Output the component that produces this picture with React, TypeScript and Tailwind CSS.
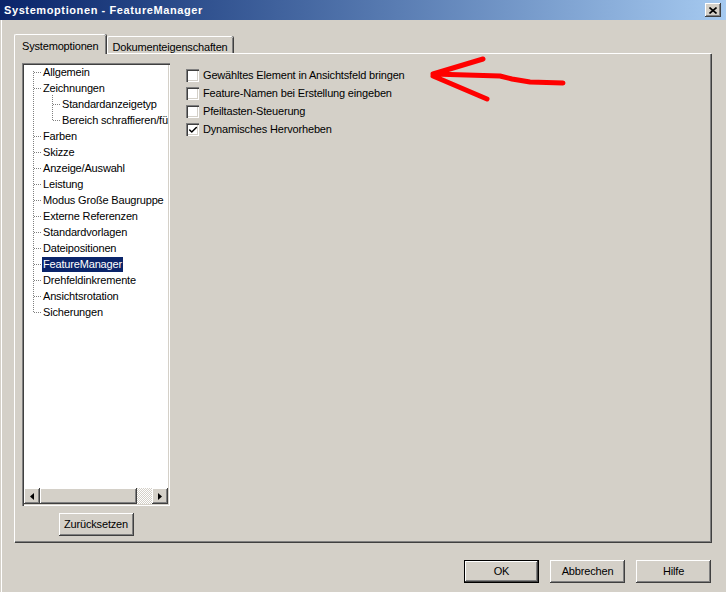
import { Check } from "lucide-react";

const raised =
  "shadow-[inset_-1px_-1px_0_#404040,inset_1px_1px_0_#ffffff,inset_-2px_-2px_0_#808080,inset_2px_2px_0_#d4d0c8]";
const sunken =
  "shadow-[inset_1px_1px_0_#808080,inset_2px_2px_0_#404040,inset_-1px_-1px_0_#ffffff,inset_-2px_-2px_0_#d4d0c8]";

const treeItems: { label: string; level: number; selected?: boolean }[] = [
  { label: "Allgemein", level: 0 },
  { label: "Zeichnungen", level: 0 },
  { label: "Standardanzeigetyp", level: 1 },
  { label: "Bereich schraffieren/füllen", level: 1 },
  { label: "Farben", level: 0 },
  { label: "Skizze", level: 0 },
  { label: "Anzeige/Auswahl", level: 0 },
  { label: "Leistung", level: 0 },
  { label: "Modus Große Baugruppe", level: 0 },
  { label: "Externe Referenzen", level: 0 },
  { label: "Standardvorlagen", level: 0 },
  { label: "Dateipositionen", level: 0 },
  { label: "FeatureManager", level: 0, selected: true },
  { label: "Drehfeldinkremente", level: 0 },
  { label: "Ansichtsrotation", level: 0 },
  { label: "Sicherungen", level: 0 },
];

const options = [
  { label: "Gewähltes Element in Ansichtsfeld bringen", checked: false },
  { label: "Feature-Namen bei Erstellung eingeben", checked: false },
  { label: "Pfeiltasten-Steuerung", checked: false },
  { label: "Dynamisches Hervorheben", checked: true },
];

function TreeLines() {
  // dotted connectors of the tree view
  const dot = { stroke: "#808080", strokeWidth: 1, strokeDasharray: "1 1" };
  return (
    <svg className="absolute left-0 top-0 pointer-events-none" width="150" height="260">
      <line x1="9.5" y1="6" x2="9.5" y2="247" {...dot} />
      {treeItems.map((it, i) =>
        it.level === 0 ? (
          <line key={i} x1="10" y1={7.5 + 16 * i} x2="17" y2={7.5 + 16 * i} {...dot} />
        ) : (
          <line key={i} x1="29" y1={7.5 + 16 * i} x2="36" y2={7.5 + 16 * i} {...dot} />
        )
      )}
      <line x1="28.5" y1="30" x2="28.5" y2="55" {...dot} />
    </svg>
  );
}

function ScrollArrow({ dir }: { dir: "left" | "right" }) {
  return (
    <div className={`w-[16px] h-[16px] bg-[#d4d0c8] flex items-center justify-center ${raised}`}>
      <svg width="4" height="7" viewBox="0 0 4 7">
        {dir === "left" ? <path d="M4 0 L0 3.5 L4 7 Z" fill="#000" /> : <path d="M0 0 L4 3.5 L0 7 Z" fill="#000" />}
      </svg>
    </div>
  );
}

function Button({ label, isDefault = false }: { label: string; isDefault?: boolean }) {
  return (
    <div className={`w-[75px] h-[23px] ${isDefault ? "border border-black" : ""}`}>
      <div className={`w-full h-full bg-[#d4d0c8] flex items-center justify-center ${raised}`}>{label}</div>
    </div>
  );
}

export default function App() {
  return (
    <div
      className="relative w-[726px] h-[592px] bg-[#d4d0c8] flex flex-col overflow-hidden text-[11px] tracking-[-0.17px] text-black"
      style={{ fontFamily: '"Liberation Sans", Arial, sans-serif' }}
    >
      {/* Title bar */}
      <div className="h-[20px] flex items-center justify-between pl-[4px] pr-[5px] bg-gradient-to-r from-[#0a246a] to-[#a6caf0]">
        <span className="text-white font-bold text-[11px] tracking-[0.6px]">Systemoptionen - FeatureManager</span>
        <div className={`w-[16px] h-[14px] bg-[#d4d0c8] flex items-center justify-center ${raised}`}>
          <svg width="8" height="7" viewBox="0 0 8 7">
            <path d="M0.5 0.5 L7.5 6.5 M7.5 0.5 L0.5 6.5" stroke="#000" strokeWidth="1.6" />
          </svg>
        </div>
      </div>

      <div className="flex-1 flex flex-col ml-[1px] border-l border-white">
        {/* Tabs */}
        <div className="flex items-end pl-[12px] mt-[13px] h-[20px]">
          <div className="relative z-10 h-[20px] -mb-px px-[7px] pt-[3px] bg-[#d4d0c8] rounded-t-[2px] border-t border-l border-white shadow-[inset_-1px_0_0_#808080,1px_0_0_#404040]">
            Systemoptionen
          </div>
          <div className="h-[17px] ml-[1px] px-[5px] pt-[2px] bg-[#d4d0c8] rounded-t-[2px] border-t border-l border-white shadow-[inset_-1px_0_0_#808080,1px_0_0_#404040]">
            Dokumenteigenschaften
          </div>
        </div>

        {/* Tab panel */}
        <div className="ml-[12px] mr-[15px] h-[489px] border-t border-l border-white shadow-[inset_-1px_-1px_0_#808080,1px_1px_0_#404040] flex pl-[7px] pt-[9px]">
          <div className="flex flex-col items-center w-[148px]">
            <div className={`w-[148px] h-[443px] bg-white p-[2px] flex flex-col ${sunken}`}>
              <div className="relative flex-1 overflow-hidden">
                <TreeLines />
                <div className="-mt-px">
                  {treeItems.map((it) => (
                    <div
                      key={it.label}
                      className={`h-[16px] flex items-center whitespace-nowrap ${it.level === 0 ? "pl-[18px]" : "pl-[37px]"}`}
                    >
                      <span className={`px-[1px] leading-[15px] ${it.selected ? "bg-[#0a246a] text-white" : ""}`}>
                        {it.label}
                      </span>
                    </div>
                  ))}
                </div>
              </div>
              <div className="h-[16px] flex">
                <ScrollArrow dir="left" />
                <div className={`w-[97px] h-[16px] bg-[#d4d0c8] ${raised}`} />
                <div className="flex-1 bg-[repeating-conic-gradient(#ffffff_0_25%,#d4d0c8_0_50%)] bg-[length:2px_2px]" />
                <ScrollArrow dir="right" />
              </div>
            </div>
            <div className="mt-[7px]">
              <Button label="Zurücksetzen" />
            </div>
          </div>

          {/* Options */}
          <div className="flex flex-col gap-[5px] pl-[16px] pt-[6px]">
            {options.map((o) => (
              <div key={o.label} className="flex items-center h-[13px]">
                <div className={`w-[13px] h-[13px] bg-white flex items-center justify-center ${sunken}`}>
                  {o.checked && <Check size={10} strokeWidth={3.5} className="text-black" />}
                </div>
                <span className="ml-[4px]">{o.label}</span>
              </div>
            ))}
          </div>
        </div>

        {/* Footer buttons */}
        <div className="flex justify-end gap-[11px] pr-[15px] mt-[18px]">
          <Button label="OK" isDefault />
          <Button label="Abbrechen" />
          <Button label="Hilfe" />
        </div>
      </div>

      {/* Red annotation arrow */}
      <svg className="absolute left-0 top-0 pointer-events-none" width="726" height="592">
        <path
          d="M563 83 L530 82 L512 79 L500 76 L433 74 M433 74 L483 59 M433 76 L487 99"
          stroke="#ff0000"
          strokeWidth="5"
          fill="none"
          strokeLinecap="round"
          strokeLinejoin="round"
        />
      </svg>
    </div>
  );
}
